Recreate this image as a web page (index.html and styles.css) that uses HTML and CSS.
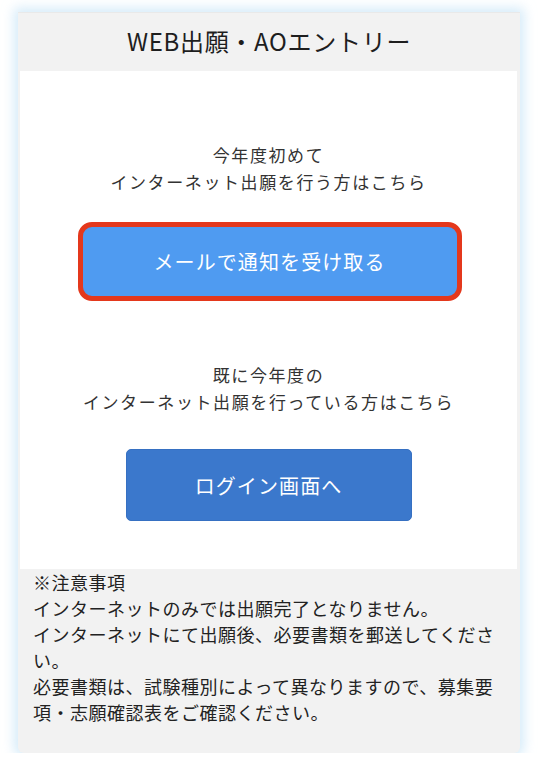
FILE: index.html
```html
<!DOCTYPE html>
<html lang="ja">
<head>
<meta charset="utf-8">
<title>WEB出願・AOエントリー</title>
<link rel="stylesheet" href="styles.css">
</head>
<body>
<div class="frame">
  <div class="header">WEB出願・AOエントリー</div>
  <div class="main">
    <p class="lead lead-first">今年度初めて<br>インターネット出願を行う方はこちら</p>
    <a class="btn btn-mail" href="#">メールで通知を受け取る</a>
    <p class="lead lead-second">既に今年度の<br>インターネット出願を行っている方はこちら</p>
    <a class="btn btn-login" href="#">ログイン画面へ</a>
  </div>
  <div class="notes">
    <p>※注意事項<br>インターネットのみでは出願完了となりません。<br>インターネットにて出願後、必要書類を郵送してください。<br>必要書類は、試験種別によって異なりますので、募集要項・志願確認表をご確認ください。</p>
  </div>
</div>
</body>
</html>
```

FILE: styles.css
```css
html, body {
  margin: 0;
  padding: 0;
  background: #ffffff;
}

body {
  font-family: "Noto Sans CJK JP", "Noto Sans", sans-serif;
  color: #333333;
  padding-top: 12px;
}

.frame {
  width: 502px;
  margin-left: 18px;
  background: #f2f2f2;
  border-top: 1px solid #e9e9e9;
  border-radius: 0 0 6px 6px;
  box-shadow: 0 0 12px 4px rgba(185, 222, 245, 0.6);
  box-sizing: border-box;
}

.header {
  height: 58px;
  padding-bottom: 3px;
  box-sizing: border-box;
  display: flex;
  align-items: center;
  justify-content: center;
  font-size: 24px;
  color: #1e1e1e;
  letter-spacing: 0.7px;
}

.main {
  background: #ffffff;
  margin: 0 3px 0 2px;
  padding: 70px 0 48px;
  display: flex;
  flex-direction: column;
  align-items: center;
}

.lead {
  margin: 0;
  font-size: 17px;
  line-height: 27px;
  letter-spacing: 1.6px;
  text-align: center;
  color: #333333;
}

.lead-second {
  margin-top: 60px;
}

.btn {
  display: flex;
  align-items: center;
  justify-content: center;
  color: #ffffff;
  text-decoration: none;
  font-size: 20px;
  letter-spacing: 1.1px;
  box-sizing: border-box;
}

.btn-mail {
  margin-top: 27px;
  width: 384px;
  height: 79px;
  background: #4f9bf1;
  border: 5px solid #e4381c;
  border-radius: 14px;
  margin-left: 2px;
}

.btn-login {
  margin-top: 34px;
  width: 286px;
  height: 72px;
  background: #3b78cc;
  border: 1px solid #3670c2;
  border-radius: 5px;
}

.notes {
  padding: 0 16px 28px 15px;
}

.notes p {
  margin: 0;
  font-size: 18px;
  line-height: 26px;
  letter-spacing: 0.5px;
  color: #222222;
}
```
